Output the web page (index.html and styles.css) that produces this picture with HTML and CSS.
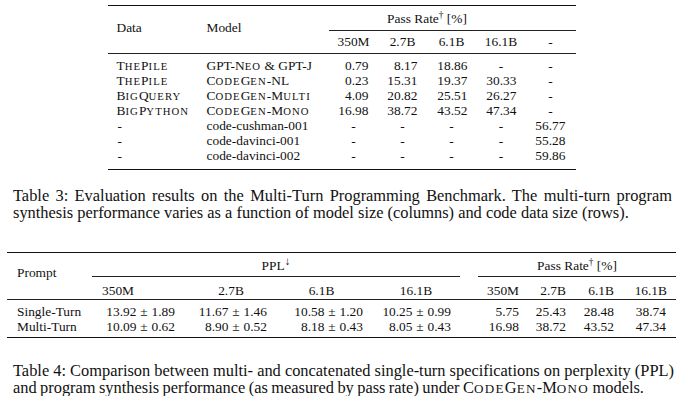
FILE: index.html
```html
<!DOCTYPE html>
<html>
<head>
<meta charset="utf-8">
<link rel="stylesheet" href="styles.css">
</head>
<body>
<div class="page">
  <table class="t3">
    <colgroup>
      <col class="w90"><col class="w131"><col class="w50"><col class="w48"><col class="w50"><col class="w49"><col class="w50">
    </colgroup>
    <thead>
      <tr class="ha">
        <th rowspan="2" class="lbl">Data</th>
        <th rowspan="2" class="lbl">Model</th>
        <th colspan="4" class="grp">Pass Rate<sup>†</sup> [%]</th>
        <th class="grp"></th>
      </tr>
      <tr class="hb">
        <th>350M</th><th>2.7B</th><th>6.1B</th><th>16.1B</th><th>-</th>
      </tr>
    </thead>
    <tbody>
      <tr class="first"><td>T<span class="s">he</span>P<span class="s">ile</span></td><td>GPT-N<span class="s">eo</span> &amp; GPT-J</td><td class="n">0.79</td><td class="n">8.17</td><td class="n">18.86</td><td class="d">-</td><td class="d">-</td></tr>
      <tr><td>T<span class="s">he</span>P<span class="s">ile</span></td><td>C<span class="s">ode</span>G<span class="s">en</span>-NL</td><td class="n">0.23</td><td class="n">15.31</td><td class="n">19.37</td><td class="n">30.33</td><td class="d">-</td></tr>
      <tr><td>B<span class="s">ig</span>Q<span class="s">uery</span></td><td>C<span class="s">ode</span>G<span class="s">en</span>-M<span class="s">ulti</span></td><td class="n">4.09</td><td class="n">20.82</td><td class="n">25.51</td><td class="n">26.27</td><td class="d">-</td></tr>
      <tr><td>B<span class="s">ig</span>P<span class="s">ython</span></td><td>C<span class="s">ode</span>G<span class="s">en</span>-M<span class="s">ono</span></td><td class="n">16.98</td><td class="n">38.72</td><td class="n">43.52</td><td class="n">47.34</td><td class="d">-</td></tr>
      <tr><td class="dl">-</td><td>code-cushman-001</td><td class="d">-</td><td class="d">-</td><td class="d">-</td><td class="d">-</td><td class="n">56.77</td></tr>
      <tr><td class="dl">-</td><td>code-davinci-001</td><td class="d">-</td><td class="d">-</td><td class="d">-</td><td class="d">-</td><td class="n">55.28</td></tr>
      <tr class="last"><td class="dl">-</td><td>code-davinci-002</td><td class="d">-</td><td class="d">-</td><td class="d">-</td><td class="d">-</td><td class="n">59.86</td></tr>
    </tbody>
  </table>

  <p class="cap cap3">Table 3: Evaluation results on the Multi-Turn Programming Benchmark. The multi-turn program synthesis performance varies as a function of model size (columns) and code data size (rows).</p>

  <table class="t4">
    <colgroup>
      <col class="w83"><col class="w95"><col class="w92"><col class="w96"><col class="w90"><col class="w66"><col class="w47"><col class="w48"><col class="w52">
    </colgroup>
    <thead>
      <tr class="ha">
        <th rowspan="2" class="lbl">Prompt</th>
        <th colspan="4" class="grp"><div class="rule ppl">PPL<sup class="arr">↓</sup></div></th>
        <th colspan="4" class="grp"><div class="rule pr">Pass Rate<sup>†</sup> [%]</div></th>
      </tr>
      <tr class="hb">
        <th class="p350">350M</th><th>2.7B</th><th class="p61">6.1B</th><th class="p161">16.1B</th>
        <th class="r">350M</th><th class="r">2.7B</th><th class="r">6.1B</th><th class="r r9">16.1B</th>
      </tr>
    </thead>
    <tbody>
      <tr class="first"><td class="lbl">Single-Turn</td><td class="n">13.92 <span class="pm">±</span> 1.89</td><td class="n">11.67 <span class="pm">±</span> 1.46</td><td class="n">10.58 <span class="pm">±</span> 1.20</td><td class="n r12">10.25 <span class="pm">±</span> 0.99</td><td class="n">5.75</td><td class="n">25.43</td><td class="n">28.48</td><td class="n r9">38.74</td></tr>
      <tr class="last"><td class="lbl">Multi-Turn</td><td class="n">10.09 <span class="pm">±</span> 0.62</td><td class="n">8.90 <span class="pm">±</span> 0.52</td><td class="n">8.18 <span class="pm">±</span> 0.43</td><td class="n r12">8.05 <span class="pm">±</span> 0.43</td><td class="n">16.98</td><td class="n">38.72</td><td class="n">43.52</td><td class="n r9">47.34</td></tr>
    </tbody>
  </table>

  <p class="cap cap4">Table 4: Comparison between multi- and concatenated single-turn specifications on perplexity (PPL) and program synthesis performance (as measured by pass rate) under C<span class="s">ode</span>G<span class="s">en</span>-M<span class="s">ono</span> models.</p>
</div>
</body>
</html>
```

FILE: styles.css
```css
html, body {
  margin: 0;
  padding: 0;
  background: #fff;
}
body {
  color: #111;
  font-family: "Liberation Serif", "Times New Roman", serif;
}
.page {
  width: 683px;
}

/* ---------- shared table bits ---------- */
table {
  border-collapse: separate;
  border-spacing: 0;
  table-layout: fixed;
  font-size: 13.4px;
  line-height: 15px;
  margin-left: auto;
  margin-right: auto;
}
th, td {
  padding: 0;
  font-weight: normal;
  white-space: nowrap;
}
sup {
  font-size: 0.7em;
  line-height: 0;
  vertical-align: 0.5em;
}
sup.arr {
  font-size: 0.85em;
  vertical-align: 0.4em;
}
/* hand-made small caps: lower-case letters set as smaller capitals */
.s {
  text-transform: uppercase;
  font-size: 0.8em;
  line-height: 1;
  letter-spacing: 0.1em;
}
.pm {
  margin: 0 0.5px;
}

.w90 { width: 90px; } .w131 { width: 131px; } .w50 { width: 50px; }
.w48 { width: 48px; } .w49 { width: 49px; } .w83 { width: 83px; }
.w95 { width: 95px; } .w92 { width: 92px; } .w96 { width: 96px; }
.w66 { width: 66px; } .w47 { width: 47px; } .w52 { width: 52px; }

/* ---------- table 3 ---------- */
.t3 {
  width: 468px;
  margin-top: 5px;
  border-top: 1px solid #111;
  border-bottom: 1px solid #111;
}
.t3 .ha th.lbl {
  text-align: left;
  vertical-align: top;
  padding: 14px 0 0 9px;
  border-bottom: 1px solid #222;
}
.t3 .ha th.grp {
  text-align: center;
  padding: 5px 0 4px;
  border-bottom: 1px solid #222;
}
.t3 .hb th {
  text-align: center;
  padding: 3px 0 4px;
  border-bottom: 1px solid #222;
}
.t3 td {
  text-align: left;
  padding-left: 9px;
}
.t3 td.n {
  text-align: right;
  padding-left: 0;
  padding-right: 9px;
}
.t3 td.d {
  text-align: center;
  padding: 0;
}
.t3 td.dl {
  padding-left: 10px;
}
.t3 td:nth-child(3).n,
.t3 td:nth-child(7).n {
  padding-right: 10px;
}
.t3 tr.first td { padding-top: 3.5px; }
.t3 tr.last td { padding-bottom: 6.5px; }

/* ---------- captions ---------- */
.cap {
  margin: 0;
  padding: 0 11px 0 13px;
  font-size: 16.4px;
  line-height: 17px;
  text-align: justify;
}
.cap3 { margin-top: 17px; }
.cap4 {
  margin-top: 24px;
  padding-right: 9px;
  word-spacing: -0.7px;
}

/* ---------- table 4 ---------- */
.t4 {
  width: 669px;
  margin-top: 31px;
  border-top: 1px solid #111;
  border-bottom: 1px solid #111;
}
.t4 .ha th.lbl {
  text-align: left;
  vertical-align: top;
  padding: 11.5px 0 0 10px;
  border-bottom: 1px solid #222;
}
.t4 .ha th.grp {
  padding: 4.5px 0 0;
}
.t4 .rule {
  text-align: center;
  padding-bottom: 3px;
  border-bottom: 1px solid #222;
}
.t4 .ppl { margin: 0 3px 0 2px; }
.t4 .pr { margin: 0 0 0 15px; }
.t4 .hb th {
  text-align: center;
  padding: 6px 0 1.5px;
  border-bottom: 1px solid #222;
}
.t4 .hb th.p350 { text-align: left; padding-left: 12px; }
.t4 .hb th.p61 { padding-right: 7px; }
.t4 .hb th.p161 { padding-right: 4px; }
.t4 .hb th.r { text-align: right; padding-right: 10px; }
.t4 .hb th.r9, .t4 td.r9 { padding-right: 9px; }
.t4 td.lbl {
  text-align: left;
  padding-left: 10px;
}
.t4 td.n {
  text-align: right;
  padding-right: 10px;
}
.t4 td.r12 { padding-right: 12px; }
.t4 tr.first td { padding-top: 3.5px; }
.t4 tr.last td { padding-bottom: 3.5px; }
```
